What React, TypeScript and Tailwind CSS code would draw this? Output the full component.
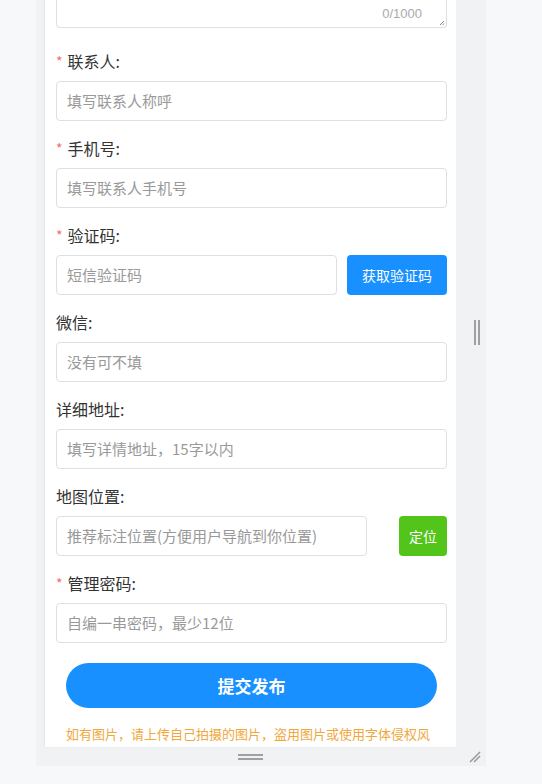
import React from "react";

const font = { fontFamily: '"Noto Sans CJK SC", "Noto Sans", sans-serif' };

function Label({ text, required }: { text: string; required?: boolean }) {
  return (
    <div className="flex h-6 items-center text-[16px] leading-6 text-[#333]">
      {required && <span className="mr-[5px] text-[14px] text-[#f56c6c]">*</span>}
      <span>{text}</span>
    </div>
  );
}

function Input({ placeholder, className = "" }: { placeholder: string; className?: string }) {
  return (
    <div
      className={`flex h-10 items-center rounded-[4px] border border-[#dcdfe6] bg-white px-[10px] text-[15px] text-[#999] ${className}`}
    >
      {placeholder}
    </div>
  );
}

function Field({
  label,
  required,
  children,
}: {
  label: string;
  required?: boolean;
  children: React.ReactNode;
}) {
  return (
    <div className="mt-[15px] flex flex-col gap-2">
      <Label text={label} required={required} />
      {children}
    </div>
  );
}

export default function App() {
  return (
    <div className="min-h-[784px] w-full bg-[#f7f8f9]" style={font}>
      <div className="ml-[36px] flex w-[450px] flex-col bg-[#f1f2f4]">
        <div className="flex h-[747px]">
          <div className="ml-[9px] w-[411px] overflow-hidden bg-white pl-[11px] pr-[9px] shadow-[-1px_0_2px_rgba(0,0,0,0.06)]">
            {/* description box, scrolled past its top */}
            <div className="relative h-[28px] rounded-b-[4px] border border-t-0 border-[#dcdfe6]">
              <span className="absolute bottom-[4px] right-[24px] text-[13px] text-[#aaa]" style={{ fontFamily: '"Liberation Sans", sans-serif' }}>
                0/1000
              </span>
              <svg className="absolute bottom-[1px] right-[1px]" width="6" height="6" viewBox="0 0 6 6">
                <path d="M5 1L1 5M5 3.5L3.5 5" stroke="#888" strokeWidth="1" />
              </svg>
            </div>

            <div className="pt-[6px]">
              <Field label="联系人:" required>
                <Input placeholder="填写联系人称呼" />
              </Field>
            </div>
            <Field label="手机号:" required>
              <Input placeholder="填写联系人手机号" />
            </Field>
            <Field label="验证码:" required>
              <div className="flex gap-[10px]">
                <Input placeholder="短信验证码" className="w-[281px]" />
                <button className="h-10 w-[100px] rounded-[4px] bg-[#1890ff] text-[14px] text-white">
                  获取验证码
                </button>
              </div>
            </Field>
            <Field label="微信:">
              <Input placeholder="没有可不填" />
            </Field>
            <Field label="详细地址:">
              <Input placeholder="填写详情地址，15字以内" />
            </Field>
            <Field label="地图位置:">
              <div className="flex justify-between">
                <Input placeholder="推荐标注位置(方便用户导航到你位置)" className="w-[311px]" />
                <button className="h-10 w-[48px] rounded-[4px] bg-[#52c41a] text-[14px] text-white">
                  定位
                </button>
              </div>
            </Field>
            <Field label="管理密码:" required>
              <Input placeholder="自编一串密码，最少12位" />
            </Field>

            <div className="px-[10px] pt-[20px]">
              <button className="h-[45px] w-full rounded-full bg-[#1890ff] text-[17px] font-bold text-white">
                提交发布
              </button>
              <p className="mt-[16px] whitespace-nowrap text-[13px] text-[#f0a83c]">
                如有图片，请上传自己拍摄的图片，盗用图片或使用字体侵权风
              </p>
            </div>
          </div>

          {/* side drag strip */}
          <div className="flex w-[30px] items-center justify-center bg-[#f1f2f4]">
            <div className="ml-[11px] mt-[-82px] flex gap-[2px]">
              <div className="h-[25px] w-[2px] bg-[#a0a0a0]" />
              <div className="h-[25px] w-[2px] bg-[#a0a0a0]" />
            </div>
          </div>
        </div>

        {/* bottom drag strip */}
        <div className="relative flex h-[19px] items-center justify-center">
          <div className="ml-[-21px] flex flex-col gap-[2px]">
            <div className="h-[2px] w-[25px] bg-[#a0a0a0]" />
            <div className="h-[2px] w-[25px] bg-[#a0a0a0]" />
          </div>
          <svg className="absolute right-[5px] top-[4px]" width="12" height="12" viewBox="0 0 12 12">
            <path d="M11 1L1 11M11 5L5 11" stroke="#999" strokeWidth="1.5" />
          </svg>
        </div>
      </div>
    </div>
  );
}
